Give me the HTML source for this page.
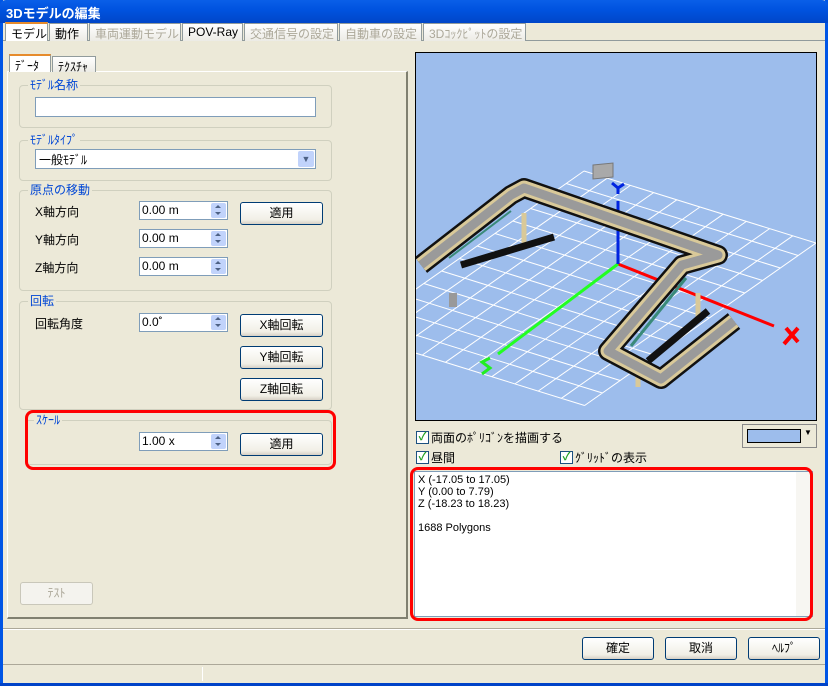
<!DOCTYPE html>
<html><head><meta charset="utf-8"><style>
*{box-sizing:border-box;margin:0;padding:0}
body{width:828px;height:686px;overflow:hidden;background:#ece9d8;font-family:"Liberation Sans","Noto Sans CJK JP",sans-serif;font-size:12px;color:#000;position:relative}
.a{position:absolute}
.title{left:0;top:0;width:828px;height:23px;background:linear-gradient(#0a5fe8,#0053e0 40%,#0046c8);color:#fff;font-weight:bold;font-size:13px;padding:3px 6px;border-radius:6px 6px 0 0}
.tab{top:23px;height:18px;border:1px solid #919b9c;border-bottom:none;background:linear-gradient(#fff,#ecebe5);padding:1px 5px;white-space:nowrap;font-size:12px}
.dis{color:#aca899}
.grp{border:1px solid #d0d0bf;border-radius:4px}
.gl{color:#0046d5;background:#ece9d8;padding:0 2px;top:-8px;left:8px;position:absolute;line-height:14px}
.inp{background:#fff;border:1px solid #7f9db9}
.btn{border:1px solid #003c74;border-radius:3px;background:linear-gradient(#fff,#f1efe6 80%,#d6d0c5);text-align:center;line-height:20px}
.spin{position:absolute;right:1px;top:1px;width:15px;height:15px;background:#c1d3fb;border-radius:2px}
.spin:before{content:"";position:absolute;left:4px;top:2px;border:3px solid transparent;border-bottom:3px solid #4d6185;border-top:none}
.spin:after{content:"";position:absolute;left:4px;top:9px;border:3px solid transparent;border-top:3px solid #4d6185;border-bottom:none}
.cb{width:13px;height:13px;border:1px solid #1c5180;background:#fff;color:#21a121;font-size:11px;line-height:11px;text-align:center;font-weight:bold}
</style></head><body>
<div class="a" style="left:0;top:0;width:3px;height:686px;background:#0055e5"></div>
<div class="a" style="right:0;top:0;width:3px;height:686px;background:#0055e5"></div>
<div class="a" style="left:0;top:683px;width:828px;height:3px;background:#0043c8"></div>
<div class="a title">3Dモデルの編集</div>
<div class="a" style="left:3px;top:40px;width:822px;height:1px;background:#919b9c"></div>
<div class="a tab" style="left:5px;top:22px;height:19px;background:#fff;border-top:2px solid #e68b2c;width:43px">モデル</div>
<div class="a tab" style="left:49px;width:39px">動作</div>
<div class="a tab dis" style="left:89px;width:92px">車両運動モデル</div>
<div class="a tab" style="left:182px;width:61px">POV-Ray</div>
<div class="a tab dis" style="left:244px;width:94px">交通信号の設定</div>
<div class="a tab dis" style="left:339px;width:83px">自動車の設定</div>
<div class="a tab dis" style="left:423px;width:103px">3Dｺｯｸﾋﾟｯﾄの設定</div>
<div class="a" style="left:7px;top:71px;width:401px;height:548px;border:1px solid #919b9c;border-top-color:#fff;border-left-color:#fff;border-right:2px solid #808070;border-bottom:2px solid #808070"></div>
<div class="a tab" style="left:9px;top:54px;height:18px;width:42px;background:#fff;border-top:2px solid #e68b2c">ﾃﾞｰﾀ</div>
<div class="a tab" style="left:52px;top:56px;height:16px;width:44px">ﾃｸｽﾁｬ</div>
<div class="a grp" style="left:19px;top:85px;width:313px;height:43px"><span class="gl">ﾓﾃﾞﾙ名称</span></div>
<div class="a inp" style="left:35px;top:97px;width:281px;height:20px"></div>
<div class="a grp" style="left:19px;top:140px;width:313px;height:41px"><span class="gl">ﾓﾃﾞﾙﾀｲﾌﾟ</span></div>
<div class="a inp" style="left:35px;top:149px;width:281px;height:20px;padding:1px 3px">一般ﾓﾃﾞﾙ<div class="a" style="right:1px;top:1px;width:16px;height:16px;background:#c1d3fb;border-radius:2px;color:#4d6185;font-size:9px;text-align:center;line-height:16px">&#9660;</div></div>
<div class="a grp" style="left:19px;top:190px;width:313px;height:101px"><span class="gl">原点の移動</span></div>
<div class="a" style="left:35px;top:203px">X軸方向</div>
<div class="a" style="left:35px;top:231px">Y軸方向</div>
<div class="a" style="left:35px;top:259px">Z軸方向</div>
<div class="a inp" style="left:139px;top:201px;width:89px;height:19px;padding:1px 2px">0.00 m<div class="spin"></div></div>
<div class="a inp" style="left:139px;top:229px;width:89px;height:19px;padding:1px 2px">0.00 m<div class="spin"></div></div>
<div class="a inp" style="left:139px;top:257px;width:89px;height:19px;padding:1px 2px">0.00 m<div class="spin"></div></div>
<div class="a btn" style="left:240px;top:202px;width:83px;height:23px">適用</div>
<div class="a grp" style="left:19px;top:301px;width:313px;height:109px"><span class="gl">回転</span></div>
<div class="a" style="left:35px;top:315px">回転角度</div>
<div class="a inp" style="left:139px;top:313px;width:89px;height:19px;padding:1px 2px">0.0˚<div class="spin"></div></div>
<div class="a btn" style="left:240px;top:314px;width:83px;height:23px">X軸回転</div>
<div class="a btn" style="left:240px;top:346px;width:83px;height:23px">Y軸回転</div>
<div class="a btn" style="left:240px;top:378px;width:83px;height:23px">Z軸回転</div>
<div class="a grp" style="left:25px;top:420px;width:307px;height:45px"><span class="gl">ｽｹｰﾙ</span></div>
<div class="a inp" style="left:139px;top:432px;width:89px;height:19px;padding:1px 2px">1.00 x<div class="spin"></div></div>
<div class="a btn" style="left:240px;top:433px;width:83px;height:23px">適用</div>
<div class="a" style="left:25px;top:410px;width:311px;height:60px;border:3px solid #f00;border-radius:8px"></div>
<div class="a" style="left:20px;top:582px;width:73px;height:23px;border:1px solid #c9c7ba;border-radius:3px;background:#f4f3ee;color:#aca899;text-align:center;line-height:21px">ﾃｽﾄ</div>
<div class="a" style="left:415px;top:52px;width:402px;height:369px;background:#9dbdec;border:1px solid #000;overflow:hidden">
<svg width="400" height="367" viewBox="0 0 400 367">
<g transform="matrix(23.2,7.2,-17.8,12.5,168,118)" stroke="#fff" fill="none">
<path vector-effect="non-scaling-stroke" stroke-width="1" d="M0 0V13M1 0V13M2 0V13M3 0V13M4 0V13M5 0V13M6 0V13M7 0V13M8 0V13M9 0V13M10 0V13M0 0H10M0 1H10M0 2H10M0 3H10M0 4H10M0 5H10M0 6H10M0 7H10M0 8H10M0 9H10M0 10H10M0 11H10M0 12H10M0 13H10"/>
</g>
<path d="M202 211L358 273" stroke="#f00" stroke-width="3"/>
<path d="M202 211L82 301" stroke="#2f2" stroke-width="3"/>
<path d="M202 211V148" stroke="#0024e0" stroke-width="3"/>
<path d="M370 275l12 14M382 275l-14 16" stroke="#f00" stroke-width="4"/>
<path d="M74 305l-8 4 8 6-8 6" stroke="#2e2" stroke-width="3" fill="none"/>
<path d="M196 130l6 5 6-4M202 135v6" stroke="#0024e0" stroke-width="3" fill="none"/>
<path d="M177 112l20-2v14l-20 2z" fill="#a9a9a9" stroke="#777"/>
<path d="M108 160v30M282 240v24M222 322v12" stroke="#d9c999" stroke-width="5"/>
<rect x="33" y="240" width="8" height="14" fill="#999"/>
<g fill="none" stroke-linejoin="round">
<path d="M5 212L95 142L108 135L302 202L266 212L192 298L245 326L318 268" stroke="#111" stroke-width="20"/>
<path d="M5 212L95 142L108 135L302 202L266 212L192 298L245 326L318 268" stroke="#d9c999" stroke-width="15"/>
<path d="M5 212L95 142L108 135L302 202L266 212L192 298L245 326L318 268" stroke="#9a9a9a" stroke-width="9"/>
<path d="M45 212L138 184" stroke="#111" stroke-width="7"/>
<path d="M232 308L292 258" stroke="#111" stroke-width="7"/>
<path d="M215 293L270 225" stroke="#3a8a7a" stroke-width="3"/>
<path d="M33 205L95 158" stroke="#3a8a7a" stroke-width="2"/>
</g>
</svg></div>
<div class="a cb" style="left:416px;top:431px">✓</div><div class="a" style="left:431px;top:429px">両面のﾎﾟﾘｺﾞﾝを描画する</div>
<div class="a" style="left:742px;top:424px;width:75px;height:24px;border:1px solid #888;background:#ece9d8"><div class="a" style="left:4px;top:4px;width:54px;height:14px;background:#9dbdec;border:1px solid #000"></div><div class="a" style="left:61px;top:3px;font-size:8px">▼</div></div>
<div class="a cb" style="left:416px;top:451px">✓</div><div class="a" style="left:431px;top:449px">昼間</div>
<div class="a cb" style="left:560px;top:451px">✓</div><div class="a" style="left:575px;top:449px">ｸﾞﾘｯﾄﾞの表示</div>
<div class="a inp" style="left:414px;top:471px;width:399px;height:146px;padding:2px 3px;line-height:12px;font-size:11px">X (-17.05 to 17.05)<br>Y (0.00 to 7.79)<br>Z (-18.23 to 18.23)<br><br>1688 Polygons
<div class="a" style="right:0;top:0;width:16px;height:144px;background:#f7f6f2"></div></div>
<div class="a" style="left:410px;top:467px;width:403px;height:154px;border:3px solid #f00;border-radius:8px"></div>
<div class="a" style="left:3px;top:628px;width:822px;height:2px;border-top:1px solid #aca899;border-bottom:1px solid #fff"></div>
<div class="a btn" style="left:582px;top:637px;width:72px;height:23px">確定</div>
<div class="a btn" style="left:665px;top:637px;width:72px;height:23px">取消</div>
<div class="a btn" style="left:748px;top:637px;width:72px;height:23px">ﾍﾙﾌﾟ</div>
<div class="a" style="left:3px;top:664px;width:822px;height:1px;background:#aca899"></div>
<div class="a" style="left:202px;top:667px;width:1px;height:14px;background:#fff"></div>
</body></html>
